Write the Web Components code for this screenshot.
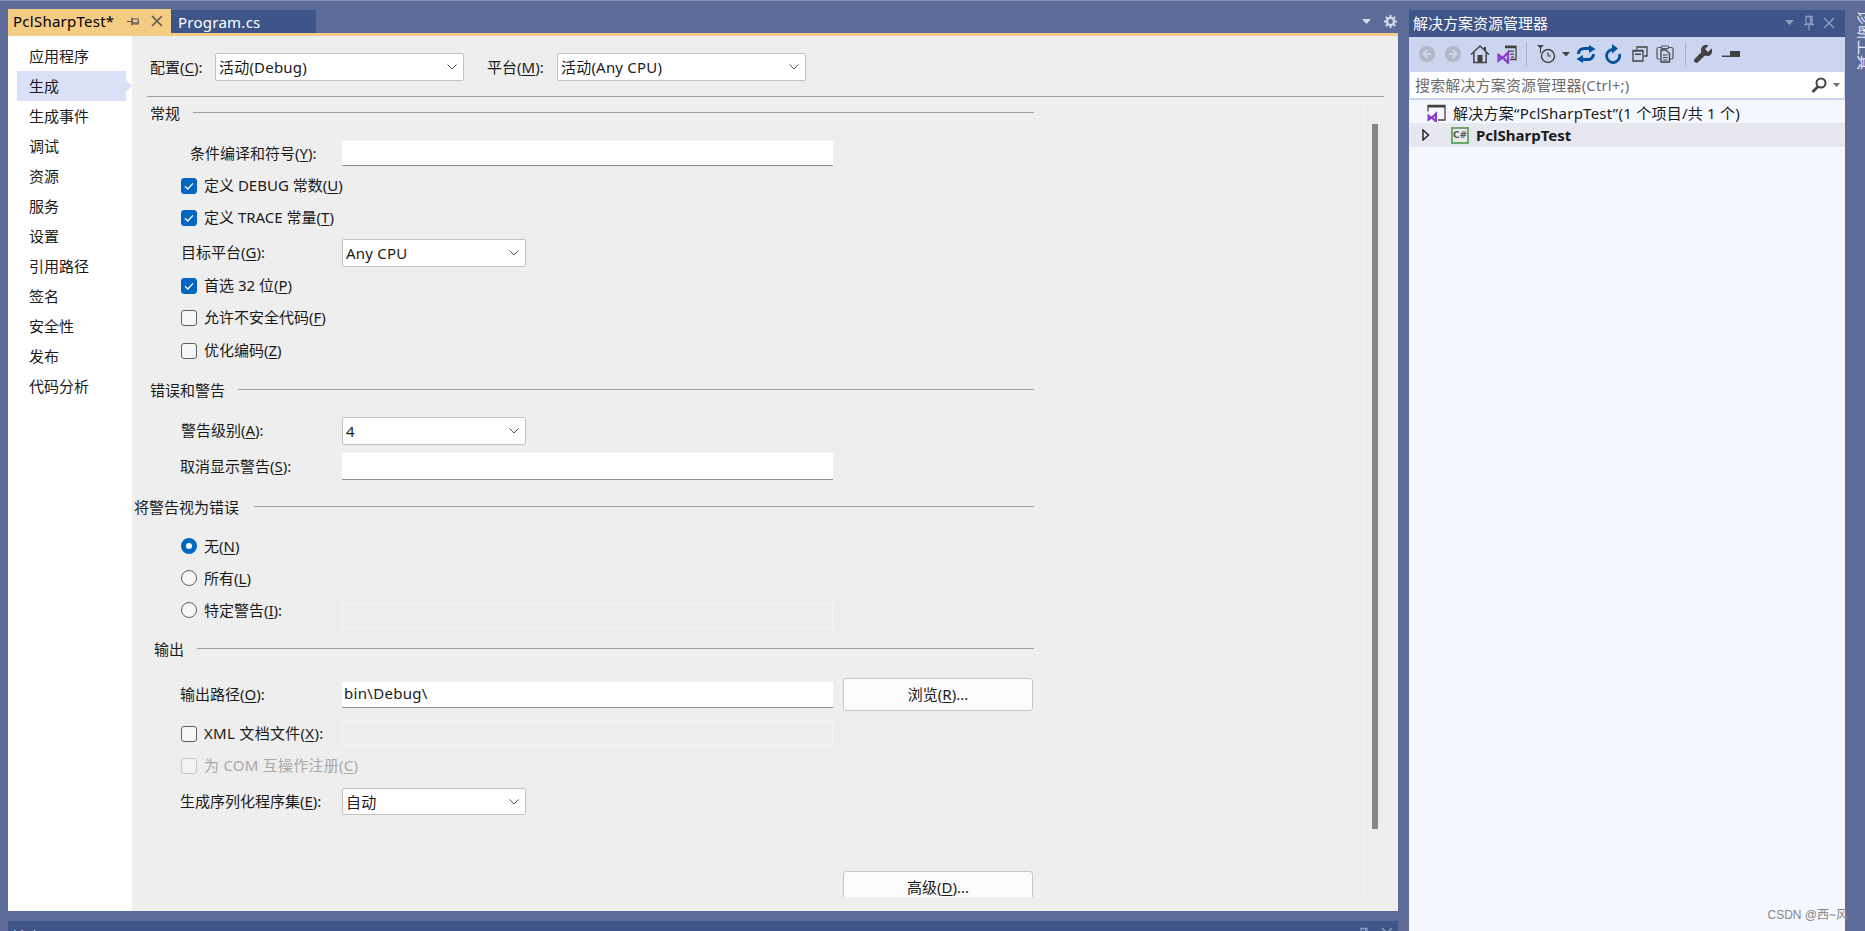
<!DOCTYPE html>
<html lang="zh">
<head>
<meta charset="utf-8">
<title>PclSharpTest</title>
<style>
  html, body { margin: 0; height: 100%; overflow: hidden; background: #5d6b99; }
</style>
</head>
<body>
<vs-app></vs-app>

<script>
const ICONS = {
  back: `<svg width="18" height="18" viewBox="0 0 18 18"><circle cx="9" cy="9" r="8" fill="#b3b8c8"/><path d="M9.5 5 5.5 9l4 4M6 9h7" fill="none" stroke="#ccd5f0" stroke-width="2"/></svg>`,
  forward: `<svg width="18" height="18" viewBox="0 0 18 18"><circle cx="9" cy="9" r="8" fill="#b3b8c8"/><path d="M8.5 5l4 4-4 4M12 9H5" fill="none" stroke="#ccd5f0" stroke-width="2"/></svg>`,
  home: `<svg width="20" height="20" viewBox="0 0 20 20"><path d="M1 10.5 10 2l9 8.5M3.8 8.5v10h12.4v-10" fill="none" stroke="#424242" stroke-width="1.5"/><path d="M14 3h2v4h-2z" fill="#424242"/><path d="M7.5 11h5v7.5h-5z" fill="#424242"/></svg>`,
  vsdoc: `<svg width="20" height="20" viewBox="0 0 20 20"><path d="M8.5 2.500h10.500v13h-6" fill="none" stroke="#424242" stroke-width="1.3"/><path d="M8 1.800h11v2.400H8zM11 6.500h6v1.300h-6zM13 9.500h4v1.300h-4zM14 12.500h3v1.300h-3z" fill="#424242"/><path d="M1.500 11l4 2.800-4 2.800zM11 8.500 6 13.800l5 5z" fill="#ccd5f0" stroke="#8a3ad0" stroke-width="2.200"/></svg>`,
  clock: `<svg width="22" height="20" viewBox="0 0 22 20"><path d="M1 1h7L4.500 4.500z" fill="#424242"/><path d="M4.500 4v5" stroke="#424242" stroke-width="1.200"/><circle cx="12" cy="12" r="6.500" fill="none" stroke="#424242" stroke-width="1.400"/><path d="M12 8.500V12h3" fill="none" stroke="#424242" stroke-width="1.200"/></svg>`,
  caret: `<svg width="8" height="5" viewBox="0 0 8 5"><path d="M0 0h8L4 4.500z" fill="#424242"/></svg>`,
  sync: `<svg width="20" height="18" viewBox="0 0 20 18"><path d="M2.500 9C2.500 5 5.500 3.500 8.500 3.500H14M17.500 9c0 4-3 5.500-6 5.500H6" fill="none" stroke="#00539c" stroke-width="3"/><path d="M13 0l6.500 4-6.500 4zM7 10l-6.500 4L7 18z" fill="#00539c"/></svg>`,
  refresh: `<svg width="18" height="20" viewBox="0 0 18 20"><path d="M15.300 10A6.500 6.500 0 1 1 8.500 5.500" fill="none" stroke="#00539c" stroke-width="2.800"/><path d="M8 0v9.500L14 4.500z" fill="#00539c"/></svg>`,
  collapse: `<svg width="16" height="16" viewBox="0 0 16 16"><path d="M5 3.500V1h10v9h-3" fill="none" stroke="#424242" stroke-width="1.300"/><path d="M1 4.500h10v10.500H1z" fill="#ccd5f0" stroke="#424242" stroke-width="1.300"/><path d="M3 7.500h6v1.500H3z" fill="#424242"/><path d="M1 4h10v1.500H1z" fill="#424242"/></svg>`,
  copy: `<svg width="18" height="18" viewBox="0 0 18 18"><path d="M5 2.500H2.500Q1 2.500 1 4v8.500q0 1.500 1.500 1.500H4M13 2.500h2.500Q17 2.500 17 4v8.500q0 1.500-1.500 1.500H14" fill="none" stroke="#555" stroke-width="1.200"/><path d="M5 5h5l3.500 3.500v8.500H5z" fill="#ccd5f0" stroke="#424242" stroke-width="1.300"/><path d="M7 10h4.500M7 12.500h4.500M7 15h4.500" stroke="#424242"/><path d="M5.500 1h7v2.500h-7z" fill="none" stroke="#555"/></svg>`,
  wrench: `<svg width="18" height="18" viewBox="0 0 18 18"><path d="M17.500 3.500 14 7l-3-3 3.500-3.500A5 5 0 0 0 7.500 7L.8 13.700a2.400 2.400 0 0 0 3.400 3.400L11 10.500a5 5 0 0 0 6.500-7z" fill="#424242"/></svg>`,
  dash: `<svg width="18" height="8" viewBox="0 0 18 8"><path d="M0 5.500h9V7H0z" fill="#424242"/><path d="M8 1h10v6H8z" fill="#424242"/></svg>`,
  search: `<svg width="16" height="16" viewBox="0 0 16 16"><circle cx="10" cy="6" r="4.500" fill="none" stroke="#424242" stroke-width="2"/><path d="M7 9.500 1.500 15" stroke="#424242" stroke-width="2.600"/></svg>`,
  sln: `<svg width="19" height="18" viewBox="0 0 19 18"><path d="M1 4.500V1.500h17v14.500h-7M1 4.500v3" fill="none" stroke="#424242" stroke-width="1.300"/><path d="M1 1h17v2.500H1z" fill="#424242"/><path d="M1.500 11.500l3 2.200-3 2.200zM9 9.500 5 13.700l4 4z" fill="#e3d3f5" stroke="#8a3ad0" stroke-width="2"/></svg>`,
  expand: `<svg width="8" height="12" viewBox="0 0 8 12"><path d="M1 1l5.500 5L1 11z" fill="none" stroke="#1e1e1e" stroke-width="1.400"/></svg>`,
  pin: `<svg width="12" height="16" viewBox="0 0 12 16"><path d="M3 1.500h6V9H3zM1 9.500h10M6 10v5.500M7.500 2v7" fill="none" stroke="currentColor" stroke-width="1.300"/></svg>`,
  close: `<svg width="12" height="12" viewBox="0 0 12 12"><path d="M1 1l10 10M11 1 1 11" fill="none" stroke="currentColor" stroke-width="1.500"/></svg>`,
  drop: `<svg width="9" height="5" viewBox="0 0 9 5"><path d="M0 0h9L4.500 5z" fill="currentColor"/></svg>`,
  gear: `<svg width="13" height="13" viewBox="0 0 13 13"><circle cx="6.500" cy="6.500" r="3.500" fill="none" stroke="currentColor" stroke-width="2.200"/><path d="M6.500 0v2.500M6.500 10.500V13M0 6.500h2.500M10.500 6.500H13M1.900 1.900l1.800 1.800M9.300 9.300l1.800 1.800M11.100 1.900 9.300 3.700M3.700 9.300l-1.800 1.800" stroke="currentColor" stroke-width="2"/></svg>`,
  chevron: `<svg width="10" height="6" viewBox="0 0 10 6"><path d="M.5.500 5 5 9.500.5" fill="none" stroke="#555" stroke-width="1"/></svg>`,
  tick: `<svg width="16" height="16" viewBox="0 0 16 16"><path d="M4 8.200 6.800 11 12 5.400" fill="none" stroke="#fff" stroke-width="1.300"/></svg>`
};

class VsTab extends HTMLElement {
  constructor() {
    super();
    this.shadowDOM = this.attachShadow({mode: 'open'});
  }
  connectedCallback() {
    const active = this.hasAttribute('active');
    this.shadowDOM.innerHTML = `
      <style>
        :host { display: flex; align-items: center; box-sizing: border-box; height: 24px; padding-left: 5px; color: #000; letter-spacing: .25px; }
        :host([active]) { background: #f5cc84; width: 163px; margin-top: 0; }
        :host(:not([active])) { background: #3f5489; color: #fff; width: 145px; height: 23px; margin-top: 1px; padding-left: 7px; }
        .text { flex: 1; white-space: nowrap; }
        .icon { display: flex; width: 24px; justify-content: center; color: #555; }
        .icon svg { display: block; }
        .pin svg { transform: rotate(90deg); }
      </style>
      <span class="text"><slot></slot></span>
      ${active ? `<span class="icon pin">${ICONS.pin.replace('width="12" height="16"', 'width="10" height="13"')}</span><span class="icon" style="margin-right:2px">${ICONS.close}</span>` : ''}
    `;
  }
}
customElements.define('vs-tab', VsTab);

class SideItem extends HTMLElement {
  constructor() {
    super();
    this.shadowDOM = this.attachShadow({mode: 'open'});
  }
  connectedCallback() {
    this.shadowDOM.innerHTML = `
      <style>
        :host { display: flex; align-items: center; position: relative; box-sizing: border-box; height: 30px; width: 109px; margin-left: 9px; padding-left: 12px; color: #1a1a1a; }
        :host([selected]) { background: #dae0f7; }
        :host([selected])::after { content: ''; position: absolute; left: 100%; top: 9px; border-left: 6px solid #dae0f7; border-top: 6px solid transparent; border-bottom: 6px solid transparent; }
      </style>
      <slot></slot>
    `;
  }
}
customElements.define('side-item', SideItem);

class GroupHeader extends HTMLElement {
  constructor() {
    super();
    this.shadowDOM = this.attachShadow({mode: 'open'});
  }
  connectedCallback() {
    this.shadowDOM.innerHTML = `
      <style>
        :host { display: flex; align-items: center; height: 20px; margin-right: 330px; color: #1a1a1a; }
        .line { flex: 1; height: 1px; background: #a0a0a0; margin-left: var(--gap, 13px); margin-top: -1px; }
      </style>
      <slot></slot><span class="line"></span>
    `;
  }
}
customElements.define('group-header', GroupHeader);

class FormRow extends HTMLElement {
  constructor() {
    super();
    this.shadowDOM = this.attachShadow({mode: 'open'});
  }
  connectedCallback() {
    this.shadowDOM.innerHTML = `
      <style>
        :host { display: flex; align-items: center; min-height: 20px; color: #1a1a1a; }
        .label { box-sizing: border-box; width: 210px; flex: none; white-space: nowrap; padding-left: var(--indent, 49px); padding-bottom: var(--lift, 2px); }
        .control { display: flex; align-items: center; gap: 10px; }
      </style>
      <div class="label"><slot name="label"></slot></div>
      <div class="control"><slot></slot></div>
    `;
  }
}
customElements.define('form-row', FormRow);

class CheckBox extends HTMLElement {
  constructor() {
    super();
    this.shadowDOM = this.attachShadow({mode: 'open'});
  }
  connectedCallback() {
    const checked = this.hasAttribute('checked');
    this.shadowDOM.innerHTML = `
      <style>
        :host { display: flex; align-items: center; height: 20px; margin-left: 49px; color: #1a1a1a; white-space: nowrap; }
        :host([disabled]) { color: #a8a8a8; }
        .box { box-sizing: border-box; width: 16px; height: 16px; border: 1px solid #5f5f5f; border-radius: 3px; margin-right: 7px; flex: none; background: #f6f6f6; }
        :host([checked]) .box { background: #0067c0; border-color: #0067c0; }
        :host([disabled]) .box { border-color: #c6c6c6; background: #f2f2f2; }
        svg { display: block; margin: -1px; }
        .t { margin-top: -2px; }
      </style>
      <span class="box">${checked ? ICONS.tick : ''}</span><span class="t"><slot></slot></span>
    `;
  }
}
customElements.define('check-box', CheckBox);

class RadioBox extends HTMLElement {
  constructor() {
    super();
    this.shadowDOM = this.attachShadow({mode: 'open'});
  }
  connectedCallback() {
    this.shadowDOM.innerHTML = `
      <style>
        :host { display: flex; align-items: center; height: 20px; color: #1a1a1a; white-space: nowrap; }
        .dot { box-sizing: border-box; width: 16px; height: 16px; border: 1px solid #5f5f5f; border-radius: 50%; margin-right: 7px; flex: none; background: #f6f6f6; }
        :host([checked]) .dot { border: 5px solid #0067c0; background: #fff; }
      </style>
      <span class="dot"></span><slot></slot>
    `;
  }
}
customElements.define('radio-box', RadioBox);

class VsSelect extends HTMLElement {
  constructor() {
    super();
    this.shadowDOM = this.attachShadow({mode: 'open'});
  }
  connectedCallback() {
    this.shadowDOM.innerHTML = `
      <style>
        :host { display: flex; align-items: center; box-sizing: border-box; width: var(--w, 184px); height: var(--h, 28px); background: #fff; border: 1px solid #c2c2c2; border-radius: 2px; padding: 0 6px 0 3px; color: #1a1a1a; white-space: nowrap; letter-spacing: .2px; }
        .text { flex: 1; }
        svg { display: block; }
      </style>
      <span class="text"><slot></slot></span>${ICONS.chevron}
    `;
  }
}
customElements.define('vs-select', VsSelect);

class VsInput extends HTMLElement {
  constructor() {
    super();
    this.shadowDOM = this.attachShadow({mode: 'open'});
  }
  connectedCallback() {
    this.shadowDOM.innerHTML = `
      <style>
        :host { display: flex; align-items: center; box-sizing: border-box; width: 491px; height: var(--h, 26px); background: #fff; border-bottom: 1px solid #8c8c8c; padding: 0 2px 2px; color: #1a1a1a; letter-spacing: .3px; }
        :host([disabled]) { background: #eeeeee; border: 1px solid #f6f6f6; }
      </style>
      <slot></slot>
    `;
  }
}
customElements.define('vs-input', VsInput);

class VsButton extends HTMLElement {
  constructor() {
    super();
    this.shadowDOM = this.attachShadow({mode: 'open'});
  }
  connectedCallback() {
    this.shadowDOM.innerHTML = `
      <style>
        :host { display: flex; align-items: center; justify-content: center; box-sizing: border-box; width: 190px; height: 33px; flex: none; padding-bottom: 2px; background: #fbfbfb; border: 1px solid #c6c6c6; border-radius: 3px; color: #1a1a1a; }
      </style>
      <slot></slot>
    `;
  }
}
customElements.define('vs-button', VsButton);

class ToolIcon extends HTMLElement {
  constructor() {
    super();
    this.shadowDOM = this.attachShadow({mode: 'open'});
  }
  connectedCallback() {
    const w = this.getAttribute('w');
    this.shadowDOM.innerHTML = `
      <style>
        :host { display: flex; align-items: center; justify-content: center; flex: none; width: ${w}px; height: 34px; }
        svg { display: block; flex: none; }
        .sep { width: 1px; height: 24px; background: #a9b4d3; }
      </style>
      ${this.getAttribute('name') === 'sep' ? '<span class="sep"></span>' : ICONS[this.getAttribute('name')]}
    `;
  }
}
customElements.define('tool-icon', ToolIcon);

class BuildPage extends HTMLElement {
  constructor() {
    super();
    this.shadowDOM = this.attachShadow({mode: 'open'});
  }
  connectedCallback() {
    const side = ['应用程序','生成','生成事件','调试','资源','服务','设置','引用路径','签名','安全性','发布','代码分析'];
    this.shadowDOM.innerHTML = `
      <style>
        :host { display: flex; height: 875px; background: #eeeeee; overflow: hidden; }
        .side { width: 124px; flex: none; background: #fff; padding-top: 5px; box-sizing: border-box; }
        .main { flex: 1; display: flex; flex-direction: column; min-width: 0; }
        .config { display: flex; align-items: center; height: 28px; margin-top: 17px; padding-left: 18px; color: #1a1a1a; white-space: nowrap; }
        .config .lbl1 { width: 65px; }
        .config .lbl2 { width: 70px; margin-left: 23px; }
        .rule { height: 1px; background: #a0a0a0; margin: 15px 14px 0 15px; flex: none; }
        .body { display: flex; height: 794px; margin-top: 6px; flex: none; }
        .form { width: 1233px; flex: none; box-sizing: border-box; border-right: 1px solid #f7f7f7; overflow: hidden; }
        .form group-header { margin-left: 18px; }
        .thumb { width: 6px; height: 705px; margin: 21px 0 0 7px; background: #868686; }
        u { text-underline-offset: 2px; }
      </style>
      <div class="side">
        ${side.map((s, i) => `<side-item ${i === 1 ? 'selected' : ''}>${s}</side-item>`).join('')}
      </div>
      <div class="main">
        <div class="config">
          <span class="lbl1">配置(<u>C</u>):</span>
          <vs-select style="--w:249px">活动(Debug)</vs-select>
          <span class="lbl2">平台(<u>M</u>):</span>
          <vs-select style="--w:249px">活动(Any CPU)</vs-select>
        </div>
        <div class="rule"></div>
        <div class="body">
          <div class="form">
            <group-header>常规</group-header>

            <form-row style="margin-top:18px;--indent:58px"><span slot="label">条件编译和符号(<u>Y</u>):</span><vs-input style="--h:25px"></vs-input></form-row>
            <check-box checked style="margin-top:10px">定义 DEBUG 常数(<u>U</u>)</check-box>
            <check-box checked style="margin-top:12px">定义 TRACE 常量(<u>T</u>)</check-box>
            <form-row style="margin-top:11px"><span slot="label">目标平台(<u>G</u>):</span><vs-select>Any CPU</vs-select></form-row>
            <check-box checked style="margin-top:9px">首选 32 位(<u>P</u>)</check-box>
            <check-box style="margin-top:12px">允许不安全代码(<u>F</u>)</check-box>
            <check-box style="margin-top:13px">优化编码(<u>Z</u>)</check-box>

            <group-header style="margin-top:19px">错误和警告</group-header>
            <form-row style="margin-top:17px"><span slot="label">警告级别(<u>A</u>):</span><vs-select>4</vs-select></form-row>
            <form-row style="margin-top:8px;--indent:48px"><span slot="label">取消显示警告(<u>S</u>):</span><vs-input style="--h:27px"></vs-input></form-row>

            <group-header style="margin-top:17px;margin-left:2px;--gap:15px">将警告视为错误</group-header>
            <form-row style="margin-top:19px;--lift:0px"><radio-box slot="label" checked>无(<u>N</u>)</radio-box></form-row>
            <form-row style="margin-top:12px;--lift:0px"><radio-box slot="label">所有(<u>L</u>)</radio-box></form-row>
            <form-row style="margin-top:12px;--lift:0px;align-items:flex-start"><radio-box slot="label">特定警告(<u>I</u>):</radio-box><vs-input disabled style="margin-top:3px"></vs-input></form-row>

            <group-header style="margin-top:10px;margin-left:22px">输出</group-header>
            <form-row style="margin-top:19px;--indent:48px"><span slot="label">输出路径(<u>O</u>):</span><vs-input>bin\\Debug\\</vs-input><vs-button>浏览(<u>R</u>)...</vs-button></form-row>
            <form-row style="margin-top:10px;height:25px;--lift:0px"><check-box slot="label" style="margin-left:0;letter-spacing:.3px">XML 文档文件(<u>X</u>):</check-box><vs-input disabled style="--h:25px"></vs-input></form-row>
            <check-box disabled style="margin-top:10px;letter-spacing:.25px">为 COM 互操作注册(<u>C</u>)</check-box>
            <form-row style="margin-top:12px;--indent:48px"><span slot="label">生成序列化程序集(<u>E</u>):</span><vs-select style="--h:27px">自动</vs-select></form-row>

            <div style="display:flex;margin:56px 0 0 711px"><vs-button>高级(<u>D</u>)...</vs-button></div>
          </div>
          <div class="thumb"></div>
        </div>
      </div>
    `;
  }
}
customElements.define('build-page', BuildPage);

class SolutionExplorer extends HTMLElement {
  constructor() {
    super();
    this.shadowDOM = this.attachShadow({mode: 'open'});
  }
  connectedCallback() {
    this.shadowDOM.innerHTML = `
      <style>
        :host { display: flex; flex-direction: column; width: 436px; flex: none; height: 921px; background: #f6f8ff; color: #1a1a1a; }
        .title { display: flex; align-items: center; box-sizing: border-box; height: 27px; flex: none; background: #3f5489; color: #fff; padding: 0 0 2px 4px; white-space: nowrap; }
        .title .t { flex: 1; }
        .title .b { display: flex; justify-content: center; width: 20px; color: #8f9bbd; }
        .title .b:last-child { margin-right: 6px; }
        .tools { display: flex; height: 34px; flex: none; background: #ccd5f0; padding-left: 5px; }
        .search { display: flex; align-items: center; box-sizing: border-box; height: 29px; flex: none; background: #fff; border: 1px solid #ccd5f0; border-top-width: 1px; border-bottom-width: 2px; padding-left: 5px; color: #6d6d6d; white-space: nowrap; }
        .search .t { flex: 1; letter-spacing: .15px; }
        .search svg { display: block; }
        .search .dr { color: #6d6d6d; margin: 0 4px 0 6px; display: flex; }
        .node { display: flex; align-items: center; box-sizing: border-box; height: 23px; white-space: nowrap; }
        .node.sln { padding: 2px 0 0 18px; gap: 7px; letter-spacing: .25px; }
        .node.proj { height: 24px; background: #e6e7ef; padding-left: 13px; font-weight: 700; }
        .node svg { display: block; flex: none; }
        .cs { box-sizing: border-box; width: 18px; height: 17px; margin: 0 7px 0 21px; border: 2px solid #6ea96e; background: #e9e9ee; color: #555; font: 700 9px/13px "DejaVu Sans", sans-serif; text-align: center; }
      </style>
      <div class="title">
        <span class="t">解决方案资源管理器</span>
        <span class="b">${ICONS.drop}</span><span class="b">${ICONS.pin}</span><span class="b">${ICONS.close}</span>
      </div>
      <div class="tools">
        <tool-icon name="back" w="26"></tool-icon>
        <tool-icon name="forward" w="26"></tool-icon>
        <tool-icon name="home" w="28"></tool-icon>
        <tool-icon name="vsdoc" w="26"></tool-icon>
        <tool-icon name="sep" w="12"></tool-icon>
        <tool-icon name="clock" w="30"></tool-icon>
        <tool-icon name="caret" w="8"></tool-icon>
        <tool-icon name="sync" w="32"></tool-icon>
        <tool-icon name="refresh" w="22"></tool-icon>
        <tool-icon name="collapse" w="32"></tool-icon>
        <tool-icon name="copy" w="18"></tool-icon>
        <tool-icon name="sep" w="22"></tool-icon>
        <tool-icon name="wrench" w="14"></tool-icon>
        <tool-icon name="dash" w="42"></tool-icon>
      </div>
      <div class="search">
        <span class="t">搜索解决方案资源管理器(Ctrl+;)</span>${ICONS.search}<span class="dr">${ICONS.drop.replace('width="9" height="5"', 'width="7" height="4"')}</span>
      </div>
      <div class="node sln">${ICONS.sln}<span>解决方案“PclSharpTest”(1 个项目/共 1 个)</span></div>
      <div class="node proj">${ICONS.expand}<span class="cs">C#</span><span>PclSharpTest</span></div>
    `;
  }
}
customElements.define('solution-explorer', SolutionExplorer);

class VsApp extends HTMLElement {
  constructor() {
    super();
    this.shadowDOM = this.attachShadow({mode: 'open'});
  }
  connectedCallback() {
    this.shadowDOM.innerHTML = `
      <style>
        :host { display: block; position: relative; height: 931px; overflow: hidden; background: #5d6b99; border-top: 1px solid #8a94b4; box-sizing: border-box; font: 15px/20px "Noto Sans", "Noto Sans CJK SC", sans-serif; }
        .shell { display: flex; height: 930px; padding-left: 8px; }
        .left { width: 1390px; flex: none; }
        .tabs { display: flex; align-items: flex-start; height: 24px; margin-top: 8px; }
        .tabs .tools { margin-left: auto; display: flex; align-items: center; height: 24px; color: #d8dded; }
        .tabs .tools svg { display: block; }
        .accent { height: 3px; background: #f5cc84; }
        .output { height: 10px; margin-top: 10px; background: #3f5489; color: #fff; overflow: hidden; display: flex; padding: 6px 0 0 4px; box-sizing: border-box; }
        .output .t { flex: 1; }
        .output .b { display: flex; width: 23px; justify-content: center; color: #8f9bbd; }
        .right { margin: 9px 0 0 11px; }
        .rail { width: 20px; flex: none; overflow: hidden; box-sizing: border-box; padding: 9px 0 0 12px; color: #e8ebf5; }
        .rail span { display: block; writing-mode: vertical-rl; text-orientation: sideways; white-space: nowrap; line-height: 16px; }
        .mark { position: absolute; right: 17px; top: 906px; font: 12px/16px "Liberation Sans", "Noto Sans CJK SC", sans-serif; color: #858585; white-space: nowrap; }
      </style>
      <div class="shell">
        <div class="left">
          <div class="tabs">
            <vs-tab active>PclSharpTest*</vs-tab>
            <vs-tab>Program.cs</vs-tab>
            <span class="tools"><span style="margin-right:13px">${ICONS.drop}</span><span style="margin-right:1px">${ICONS.gear}</span></span>
          </div>
          <div class="accent"></div>
          <build-page></build-page>
          <div class="output">
            <span class="t">输出</span>
            <span class="b">${ICONS.pin}</span><span class="b">${ICONS.close}</span>
          </div>
        </div>
        <solution-explorer class="right"></solution-explorer>
        <div class="rail"><span>诊断工具</span></div>
      </div>
      <div class="mark">CSDN @西~风</div>
    `;
  }
}
customElements.define('vs-app', VsApp);
</script>
</body>
</html>
